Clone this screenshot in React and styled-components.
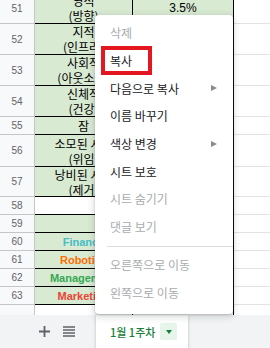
import React from "react"
import styled, { createGlobalStyle } from "styled-components"

const GlobalStyle = createGlobalStyle`
  html, body {
    margin: 0;
    padding: 0;
    width: 270px;
    height: 348px;
    overflow: hidden;
    background: #fff;
    font-family: "Noto Sans CJK KR", "Liberation Sans", sans-serif;
  }
`

const Page = styled.div`
  position: relative;
  width: 270px;
  height: 348px;
  display: flex;
  flex-direction: column;
`

const Viewport = styled.div`
  height: 315px;
  overflow: hidden;
  flex: none;
`

// scrolled a few px past the top of row 51
const Grid = styled.div`
  margin-top: -7px;
  display: flex;
  flex-direction: column;
`

const Row = styled.div`
  display: grid;
  grid-template-columns: 35px 98px 101px 1fr;
  height: ${(p) => p.$h}px;
  flex: none;
`

const RowHead = styled.div`
  box-sizing: border-box;
  background: #f8f9fa;
  border-right: 1px solid #c4c7c5;
  border-bottom: 1px solid #c4c7c5;
  display: flex;
  align-items: center;
  justify-content: center;
  font-family: "Liberation Sans", Arial, sans-serif;
  font-size: 10px;
  color: #5f6368;
`

const Cell = styled.div`
  box-sizing: border-box;
  background: ${(p) => (p.$blank ? "#fff" : "#d9ead3")};
  border-right: 1px solid #000;
  border-bottom: 1px solid ${(p) => (p.$last ? "#e2e2e2" : "#000")};
  display: flex;
  align-items: center;
  justify-content: center;
  overflow: hidden;
  color: #000;
`

const CellText = styled.span`
  white-space: pre;
  text-align: center;
  font-size: 12px;
  line-height: 15px;
`

const Label = styled.span`
  font-family: "Liberation Sans", Arial, sans-serif;
  font-weight: 700;
  font-size: 11px;
  white-space: nowrap;
  color: ${(p) => p.$color};
`

const Pct = styled.span`
  font-family: "Liberation Sans", Arial, sans-serif;
  font-size: 12px;
`

const Blank = styled.div`
  box-sizing: border-box;
  border-bottom: 1px solid #e2e2e2;
`

const Menu = styled.div`
  position: absolute;
  left: 95px;
  top: 15px;
  width: 138px;
  height: 299px;
  box-sizing: border-box;
  padding-top: 4px;
  background: #fff;
  border-radius: 4px;
  box-shadow: 0 1px 2px rgba(60, 64, 67, 0.3), 0 2px 6px 2px rgba(60, 64, 67, 0.15);
`

const Item = styled.div`
  height: 27.7px;
  display: flex;
  align-items: center;
  justify-content: space-between;
  padding: 0 16px 0 15px;
  font-size: 12px;
  color: ${(p) => (p.$disabled ? "#a8abae" : "#202124")};
`

const Arrow = styled.span`
  width: 0;
  height: 0;
  border-top: 3.5px solid transparent;
  border-bottom: 3.5px solid transparent;
  border-left: 6px solid #8a8a8a;
`

const Separator = styled.div`
  height: 1px;
  background: #dadce0;
  margin: 5px 0 4px 12px;
`

const Highlight = styled.div`
  position: absolute;
  left: 6px;
  top: 31px;
  width: 51px;
  height: 29px;
  box-sizing: border-box;
  border: 4px solid #e4161f;
`

const Bar = styled.div`
  flex: 1;
  background: #f1f3f4;
  display: flex;
  align-items: stretch;
  padding-left: 26px;
`

const IconButton = styled.div`
  width: ${(p) => p.$w}px;
  display: flex;
  align-items: center;
  justify-content: center;
  color: #5f6368;
`

const Tab = styled.div`
  margin-left: 20px;
  width: 92px;
  background: #fff;
  box-shadow: 0 1px 3px rgba(60, 64, 67, 0.3);
  display: flex;
  align-items: center;
  padding-left: 14px;
  box-sizing: border-box;
  gap: 5px;
  font-size: 11px;
  font-weight: 500;
  color: #188038;
`

const Drop = styled.div`
  width: 17px;
  height: 17px;
  border-radius: 2px;
  background: #e6f4ea;
  display: flex;
  align-items: center;
  justify-content: center;

  &::after {
    content: "";
    border-left: 3.5px solid transparent;
    border-right: 3.5px solid transparent;
    border-top: 4px solid #188038;
  }
`

const rows = [
  { n: 51, h: 31, a: "영적\n(방향)", b: "3.5%" },
  { n: 52, h: 31, a: "지적\n(인프라)" },
  { n: 53, h: 31, a: "사회적\n(아웃소싱)" },
  { n: 54, h: 31, a: "신체적\n(건강)" },
  { n: 55, h: 18, a: "잠" },
  { n: 56, h: 32, a: "소모된 시간\n(위임)" },
  { n: 57, h: 30, a: "낭비된 시간\n(제거)" },
  { n: 58, h: 18, blank: true },
  { n: 59, h: 18 },
  { n: 60, h: 18, label: "Finance", color: "#46bdc6" },
  { n: 61, h: 18, label: "Robotics", color: "#ff6d01" },
  { n: 62, h: 18, label: "Management", color: "#34a853" },
  { n: 63, h: 18, label: "Marketing", color: "#ea4335" },
  { n: "", h: 30, blank: true, last: true },
]

const items = [
  { t: "삭제", off: true },
  { t: "복사" },
  { t: "다음으로 복사", sub: true },
  { t: "이름 바꾸기" },
  { t: "색상 변경", sub: true },
  { t: "시트 보호" },
  { t: "시트 숨기기", off: true },
  { t: "댓글 보기", off: true },
]

export default function App() {
  return (
    <Page>
      <GlobalStyle />
      <Viewport>
        <Grid>
          {rows.map((r, i) => (
            <Row key={i} $h={r.h}>
              <RowHead>{r.n}</RowHead>
              <Cell $blank={r.blank} $last={r.last}>
                {r.a && <CellText>{r.a}</CellText>}
                {r.label && <Label $color={r.color}>{r.label}</Label>}
              </Cell>
              <Cell $blank={r.blank} $last={r.last}>
                {r.b && <Pct>{r.b}</Pct>}
              </Cell>
              <Blank />
            </Row>
          ))}
        </Grid>
      </Viewport>
      <Bar>
        <IconButton $w={36}>
          <svg width="11" height="11" viewBox="0 0 11 11">
            <path d="M5.5 0v11M0 5.5h11" stroke="currentColor" strokeWidth="1.8" />
          </svg>
        </IconButton>
        <IconButton $w={14}>
          <svg width="12" height="11" viewBox="0 0 12 11">
            <path d="M0 1h12M0 4h12M0 7h12M0 10h12" stroke="currentColor" strokeWidth="1.6" />
          </svg>
        </IconButton>
        <Tab>
          <span>1월 1주차</span>
          <Drop />
        </Tab>
      </Bar>
      <Menu>
        {items.map((it) => (
          <Item key={it.t} $disabled={it.off}>
            <span>{it.t}</span>
            {it.sub && <Arrow />}
          </Item>
        ))}
        <Separator />
        <Item $disabled>
          <span>오른쪽으로 이동</span>
        </Item>
        <Item $disabled>
          <span>왼쪽으로 이동</span>
        </Item>
        <Highlight />
      </Menu>
    </Page>
  )
}
